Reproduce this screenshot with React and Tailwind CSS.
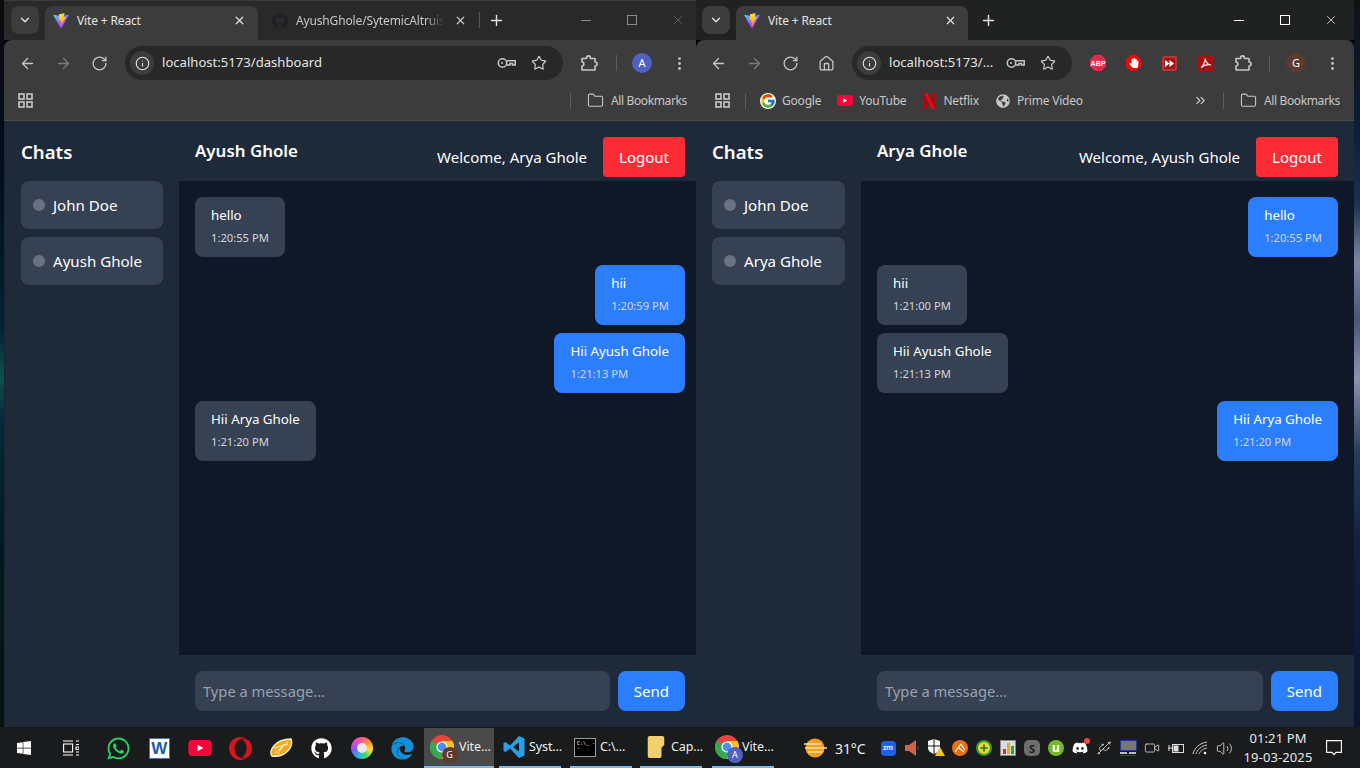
import React from "react";
import { ArrowLeft, ArrowRight, RotateCw, House, Info, Star, EllipsisVertical, Folder, X, Plus, ChevronDown, ChevronsRight, Usb, Volume2, Video } from "lucide-react";
import { FaWhatsapp, FaGithub, FaWindows, FaDiscord, FaGlobeAmericas, FaFolder, FaEdge, FaHandPaper } from "react-icons/fa";
import { FcGoogle } from "react-icons/fc";
import { SiOpera } from "react-icons/si";

const Vite = () => (
  <svg width="16" height="16" viewBox="0 0 410 404" fill="none">
    <defs>
      <linearGradient id="va" x1="6" y1="33" x2="235" y2="344" gradientUnits="userSpaceOnUse"><stop stopColor="#41D1FF" /><stop offset="1" stopColor="#BD34FE" /></linearGradient>
      <linearGradient id="vb" x1="194" y1="8" x2="236" y2="292" gradientUnits="userSpaceOnUse"><stop stopColor="#FFEA83" /><stop offset=".08" stopColor="#FFDD35" /><stop offset="1" stopColor="#FFA800" /></linearGradient>
    </defs>
    <path d="M399.641 59.5246L215.643 388.545C211.844 395.338 202.084 395.378 198.228 388.618L10.5817 59.5563C6.38087 52.1896 12.6802 43.2665 21.0281 44.7586L205.223 77.6824C206.398 77.8924 207.601 77.8904 208.776 77.6763L389.119 44.8058C397.439 43.2894 403.768 52.1434 399.641 59.5246Z" fill="url(#va)" />
    <path d="M292.965 1.5744L156.801 28.2552C154.563 28.6937 152.906 30.5903 152.771 32.8664L144.395 174.33C144.198 177.662 147.258 180.248 150.51 179.498L188.42 170.749C191.967 169.931 195.172 173.055 194.443 176.622L183.18 231.775C182.422 235.487 185.907 238.661 189.532 237.56L212.947 230.446C216.577 229.344 220.065 232.527 219.297 236.242L201.398 322.875C200.278 328.294 207.486 331.249 210.492 326.603L212.5 323.5L323.454 102.072C325.312 98.3645 322.108 94.137 318.036 94.9228L279.014 102.454C275.347 103.161 272.227 99.746 273.262 96.1583L298.731 7.86689C299.767 4.27314 296.636 0.855181 292.965 1.5744Z" fill="url(#vb)" />
  </svg>
);

const Slot = ({ w, className = "", children }) => (
  <div className={`flex shrink-0 items-center justify-center ${className}`} style={{ width: w }}>{children}</div>
);

const KeyIcon = () => (
  <svg width="20" height="12" viewBox="0 0 20 12" fill="none" stroke="#c7c7c7" strokeWidth="1.5">
    <circle cx="5.5" cy="6" r="4.2" /><circle cx="5" cy="6" r="1" fill="#c7c7c7" stroke="none" />
    <path d="M9.7 3.8H18.2V8H15.5V6.6H13V8H10" />
  </svg>
);
const PuzzleIcon = () => (
  <svg width="18" height="18" viewBox="0 0 18 18" fill="none" stroke="#c7c7c7" strokeWidth="1.6" strokeLinejoin="round">
    <path d="M2 4.5H6.5C6.5 1 10.5 1 10.5 4.5H15V8C17.8 8 17.8 12 15 12V16H2V12C4.5 12 4.5 8 2 8Z" />
  </svg>
);
const AppsIcon = () => (
  <svg width="15" height="15" viewBox="0 0 15 15" fill="none" stroke="#c7c7c7" strokeWidth="1.6">
    <rect x="1" y="1" width="5" height="5" /><rect x="9" y="1" width="5" height="5" /><rect x="1" y="9" width="5" height="5" /><rect x="9" y="9" width="5" height="5" />
  </svg>
);
const Avatar = ({ letter, bg, size = 20, text = "text-[11px]" }) => (
  <div className={`flex items-center justify-center rounded-full text-white ${text}`} style={{ width: size, height: size, background: bg }}>{letter}</div>
);
const Sep = () => <div className="h-4 w-[1px] shrink-0 bg-[#5e5e5e]" />;
const AllBookmarks = () => (
  <div className="flex shrink-0 items-center gap-[7px]">
    <Folder size={17} color="#c7c7c7" strokeWidth={1.5} />
    <span className="whitespace-nowrap text-[12px] tracking-[-0.36px] text-[#c7c7c7]">All Bookmarks</span>
  </div>
);
const TabClose = ({ color = "#e3e3e3" }) => <X size={13} color={color} strokeWidth={2.2} className="shrink-0" />;

const Nav = ({ icon: I, color = "#c7c7c7" }) => (
  <Slot w={36}><I size={17} color={color} strokeWidth={1.8} /></Slot>
);

const Omnibox = ({ w, url }) => (
  <div className="ml-2 flex h-[34px] shrink-0 items-center rounded-full bg-[#282828] pl-[5px]" style={{ width: w }}>
    <div className="flex h-6 w-6 shrink-0 items-center justify-center rounded-full bg-[#3c3c3c]"><Info size={15} color="#e3e3e3" strokeWidth={1.8} /></div>
    <span className="ml-2 flex-1 whitespace-nowrap text-[13.1px] text-[#e3e3e3]">{url}</span>
    <Slot w={32}><KeyIcon /></Slot>
    <Slot w={32}><Star size={16} color="#c7c7c7" strokeWidth={1.8} /></Slot>
    <div className="w-2 shrink-0" />
  </div>
);

const YT = ({ w = 16, h = 11 }) => (
  <svg width={w} height={h} viewBox="0 0 16 11"><rect width="16" height="11" rx="2.5" fill="#f5063b" /><path d="M6.3 3.2V7.8L10.3 5.5Z" fill="#fff" /></svg>
);
const Netflix = () => (
  <svg width="11" height="16" viewBox="0 0 11 16"><path d="M0 0H3.4V16L0 16Z" fill="#b1060f" /><path d="M7.6 0H11V16H7.6Z" fill="#b1060f" /><path d="M0 0H3.4L11 16H7.6Z" fill="#e50914" /></svg>
);

const Sidebar = ({ w, names }) => (
  <div className="flex shrink-0 flex-col bg-gray-800 p-4" style={{ width: w }}>
    <h2 className="mb-4 h-7 pt-[1px] text-[18.6px] font-semibold leading-7 text-white">Chats</h2>
    <div className="flex flex-col gap-2">
      {names.map((n) => (
        <div key={n} className="flex h-12 items-center gap-2 rounded-lg bg-gray-700 px-3">
          <span className="h-3 w-3 rounded-full bg-gray-500" />
          <span className="text-[15.1px] text-white">{n}</span>
        </div>
      ))}
    </div>
  </div>
);

const Bubble = ({ mine, text, time }) => (
  <div className={`flex ${mine ? "justify-end" : "justify-start"}`}>
    <div className={`h-[60px] rounded-lg px-4 pt-2 ${mine ? "bg-blue-500" : "bg-gray-700"}`}>
      <p className="h-5 text-[13.3px] leading-5 text-white">{text}</p>
      <p className="mt-[1px] text-[11.2px] leading-6 text-gray-300">{time}</p>
    </div>
  </div>
);

const Chat = ({ name, me, msgs, className }) => (
  <div className={`flex min-w-0 flex-col ${className}`}>
    <div className="flex h-[60px] shrink-0 items-start justify-between bg-gray-800 px-4 pt-4">
      <h2 className="text-[16.9px] font-semibold leading-7 text-white">{name}</h2>
      <div className="flex items-center gap-4">
        <span className="text-[15px] text-white">Welcome, {me}</span>
        <button className="h-10 rounded bg-red-500 px-4 text-[15px] text-white">Logout</button>
      </div>
    </div>
    <div className="flex flex-1 flex-col gap-2 bg-gray-900 p-4">
      {msgs.map((m, i) => <Bubble key={i} {...m} />)}
    </div>
    <div className="flex h-[72px] shrink-0 gap-2 bg-gray-800 p-4">
      <input readOnly placeholder="Type a message..." className="h-10 min-w-0 flex-1 rounded-lg bg-gray-700 px-2 text-[14.7px] text-white outline-none placeholder:text-gray-400" />
      <button className="h-10 rounded-lg bg-blue-500 px-4 text-[15px] text-white">Send</button>
    </div>
  </div>
);

const Window1 = () => (
  <div className="flex w-[692px] shrink-0 flex-col overflow-hidden">
    <div className="flex h-10 shrink-0 items-end border-t border-[#3a3a3a] bg-[#292929]">
      <div className="ml-[7px] mb-[6px] flex h-7 w-7 items-center justify-center rounded-lg bg-[#3c3c3c]"><ChevronDown size={14} color="#e3e3e3" strokeWidth={2.4} /></div>
      <div className="ml-[6px] flex h-[34px] w-[213px] items-center rounded-t-lg bg-[#3c3c3c] pb-[5px] pl-[8px] pr-[12px]">
        <Vite />
        <span className="ml-2 flex-1 whitespace-nowrap text-[12px] tracking-[-0.15px] text-[#e3e3e3]">Vite + React</span>
        <TabClose />
      </div>
      <div className="flex h-[34px] w-[221px] items-center pb-[5px] pl-[14px]">
        <FaGithub size={16} color="#1d2026" className="shrink-0" />
        <span className="ml-[8px] w-[148px] shrink-0 overflow-hidden whitespace-nowrap text-[12px] tracking-[-0.15px] text-[#c7c7c7] [mask-image:linear-gradient(90deg,#000_88%,transparent)]">AyushGhole/SytemicAltruism</span>
        <div className="ml-[10px]"><TabClose color="#c7c7c7" /></div>
      </div>
      <div className="mb-[12px] h-4 w-[1px] bg-[#555]" />
      <Slot w={33} className="mb-[11px]"><Plus size={17} color="#e3e3e3" strokeWidth={2} /></Slot>
      <div className="flex-1" />
      <div className="-mr-[5px] mb-[13px] flex items-center">
        <Slot w={46}><div className="h-[1px] w-[10px] bg-[#8a8a8a]" /></Slot>
        <Slot w={46}><div className="h-[10px] w-[10px] border border-[#8a8a8a]" /></Slot>
        <Slot w={46}><X size={14} color="#8a8a8a" strokeWidth={1} /></Slot>
      </div>
    </div>
    <div className="flex h-[41px] shrink-0 items-start rounded-tl-lg bg-[#3c3c3c] pl-[5px] pt-[6px]">
      <div className="flex h-[34px] items-center">
        <Nav icon={ArrowLeft} /><Nav icon={ArrowRight} color="#7b7b7b" /><Nav icon={RotateCw} />
        <Omnibox w={438} url="localhost:5173/dashboard" />
        <Slot w={36} className="ml-[8px]"><PuzzleIcon /></Slot>
        <div className="ml-[9px]"><Sep /></div>
        <Slot w={50}><Avatar letter="A" bg="#5261bf" /></Slot>
        <Slot w={24}><EllipsisVertical size={17} color="#c7c7c7" /></Slot>
      </div>
    </div>
    <div className="flex h-10 shrink-0 items-center border-b border-[#4b4b4b] bg-[#3c3c3c] pl-[14px]">
      <AppsIcon />
      <div className="flex-1" />
      <Sep />
      <div className="ml-[16px] mr-[9px]"><AllBookmarks /></div>
    </div>
    <div className="flex min-h-0 flex-1 border-l border-[#1b2431]">
      <Sidebar w={174} names={["John Doe", "Ayush Ghole"]} />
      <Chat className="w-[522px] shrink-0" name="Ayush Ghole" me="Arya Ghole" msgs={[
        { text: "hello", time: "1:20:55 PM" },
        { mine: true, text: "hii", time: "1:20:59 PM" },
        { mine: true, text: "Hii Ayush Ghole", time: "1:21:13 PM" },
        { text: "Hii Arya Ghole", time: "1:21:20 PM" },
      ]} />
    </div>
  </div>
);

const Window2 = () => (
  <div className="flex w-[658px] shrink-0 flex-col">
    <div className="flex h-10 shrink-0 items-end bg-[#202121]">
      <div className="ml-[6px] mb-[6px] flex h-7 w-7 items-center justify-center rounded-lg bg-[#3c3c3c]"><ChevronDown size={14} color="#e3e3e3" strokeWidth={2.4} /></div>
      <div className="ml-[6px] flex h-[34px] w-[232px] items-center rounded-t-lg bg-[#3c3c3c] pb-[5px] pl-[8px] pr-[11px]">
        <Vite />
        <span className="ml-2 flex-1 whitespace-nowrap text-[12px] tracking-[-0.15px] text-[#e3e3e3]">Vite + React</span>
        <TabClose />
      </div>
      <Slot w={40} className="mb-[11px]"><Plus size={17} color="#e3e3e3" strokeWidth={2} /></Slot>
      <div className="flex-1" />
      <div className="mb-[13px] flex items-center">
        <Slot w={46}><div className="h-[1px] w-[10px] bg-white" /></Slot>
        <Slot w={46}><div className="h-[10px] w-[10px] border border-white" /></Slot>
        <Slot w={46}><X size={14} color="#fff" strokeWidth={1.2} /></Slot>
      </div>
    </div>
    <div className="flex h-[41px] shrink-0 items-start rounded-t-lg bg-[#3c3c3c] pl-1 pt-[6px]">
      <div className="flex h-[34px] items-center">
        <Nav icon={ArrowLeft} /><Nav icon={ArrowRight} color="#7b7b7b" /><Nav icon={RotateCw} /><Nav icon={House} />
        <Omnibox w={220} url="localhost:5173/..." />
        <Slot w={36} className="ml-[8px]">
          <svg width="16" height="16" viewBox="0 0 16 16"><path d="M4.7 0H11.3L16 4.7V11.3L11.3 16H4.7L0 11.3V4.7Z" fill="#f0264f" /><text x="8" y="10.5" textAnchor="middle" fontSize="7" fontWeight="700" fill="#fff" fontFamily="Liberation Sans">ABP</text></svg>
        </Slot>
        <Slot w={35}>
          <div className="flex h-4 w-4 items-center justify-center bg-[#e80b0b] [clip-path:polygon(30%_0,70%_0,100%_30%,100%_70%,70%_100%,30%_100%,0_70%,0_30%)]"><FaHandPaper size={10} color="#fff" /></div>
        </Slot>
        <Slot w={37}>
          <div className="flex h-[15px] w-[15px] items-center justify-center rounded-[2px] border-2 border-[#b43636] bg-[#a01616]">
            <svg width="9" height="7" viewBox="0 0 9 7"><path d="M0 0L4.5 3.5L0 7ZM4.5 0L9 3.5L4.5 7Z" fill="#fff" /></svg>
          </div>
        </Slot>
        <Slot w={36}>
          <div className="flex h-4 w-4 items-center justify-center rounded-[2px] bg-[#a80f0f]">
            <svg width="12" height="12" viewBox="0 0 12 12" fill="none" stroke="#fff" strokeWidth="1.1"><path d="M1 10.5C3 9.5 5 5 5.3 1.5C5.6 5 8 8 11 8C8 7.2 4 8 1 10.5Z" /></svg>
          </div>
        </Slot>
        <Slot w={38}><PuzzleIcon /></Slot>
        <Slot w={14}><Sep /></Slot>
        <Slot w={40}><Avatar letter="G" bg="#5b3a30" text="text-[11px] text-[#d8d8d8]" /></Slot>
        <Slot w={32}><EllipsisVertical size={17} color="#c7c7c7" /></Slot>
      </div>
    </div>
    <div className="flex h-10 shrink-0 items-center border-b border-[#4b4b4b] bg-[#3c3c3c] pl-[19px]">
      <AppsIcon />
      <div className="ml-[15px] mr-[14px]"><Sep /></div>
      <div className="flex items-center gap-[6px]"><FcGoogle size={16} className="rounded-full bg-white" /><span className="text-[12px] tracking-[-0.2px] text-[#c7c7c7]">Google</span></div>
      <div className="ml-[16px] flex items-center gap-[6px]"><YT /><span className="text-[12px] tracking-[-0.2px] text-[#c7c7c7]">YouTube</span></div>
      <div className="ml-[18px] flex items-center gap-[8px]"><Netflix /><span className="text-[12px] tracking-[-0.2px] text-[#c7c7c7]">Netflix</span></div>
      <div className="ml-[17px] flex items-center gap-[7px]"><FaGlobeAmericas size={14} color="#c7c7c7" /><span className="whitespace-nowrap text-[12px] tracking-[-0.2px] text-[#c7c7c7]">Prime Video</span></div>
      <div className="flex-1" />
      <ChevronsRight size={15} color="#c7c7c7" />
      <div className="ml-[15px] mr-[16px]"><Sep /></div>
      <div className="mr-[14px]"><AllBookmarks /></div>
    </div>
    <div className="flex min-h-0 flex-1">
      <Sidebar w={165} names={["John Doe", "Arya Ghole"]} />
      <Chat className="flex-1" name="Arya Ghole" me="Ayush Ghole" msgs={[
        { mine: true, text: "hello", time: "1:20:55 PM" },
        { text: "hii", time: "1:21:00 PM" },
        { text: "Hii Ayush Ghole", time: "1:21:13 PM" },
        { mine: true, text: "Hii Arya Ghole", time: "1:21:20 PM" },
      ]} />
    </div>
  </div>
);

const Chrome = ({ letter, bg }) => (
  <div className="relative h-[24px] w-[24px] shrink-0">
    <svg width="24" height="24" viewBox="0 0 24 24">
      <circle cx="12" cy="12" r="12" fill="#e8453c" />
      <path d="M12 12L1.6 6A12 12 0 0 0 12 24L18 15Z" fill="#34a853" />
      <path d="M12 12L12 24A12 12 0 0 0 22.4 6H12Z" fill="#fbc116" />
      <circle cx="12" cy="12" r="5.6" fill="#fff" /><circle cx="12" cy="12" r="4.4" fill="#4a90f0" />
    </svg>
    <div className="absolute -bottom-[4px] -right-[4px]"><Avatar letter={letter} bg={bg} size={16} text="text-[9px]" /></div>
  </div>
);

const TaskApp = ({ w, active, icon, label, iconW = 34, ml = 0 }) => (
  <div className={`flex h-10 shrink-0 items-center border-b-[2px] border-[#76b9ed] ${active ? "bg-[#4a4a4a]" : ""}`} style={{ width: w, marginLeft: ml }}>
    <Slot w={iconW}>{icon}</Slot>
    <span className="whitespace-nowrap text-[12.5px] tracking-[-0.1px] text-[#eeeeee]">{label}</span>
  </div>
);

const T = ({ children, w = 40.5 }) => <Slot w={w}>{children}</Slot>;

const Taskbar = () => (
  <div className="flex h-[41px] shrink-0 items-center border-t border-[#16191c] bg-[#1a1b1c]">
    <T w={48}><FaWindows size={16} color="#fff" /></T>
    <T w={46}>
      <svg width="16" height="16" viewBox="0 0 16 16" fill="none" stroke="#fff" strokeWidth="1.1"><path d="M0 1H10M0 15H10" /><rect x=".6" y="4" width="9" height="8" /><path d="M13 1H16M13 4.5H16M13 7H16V9.5H13ZM13 12H16M13 15H16" /></svg>
    </T>
    <div className="w-[4.5px]" />
    <T><FaWhatsapp size={25} color="#25d366" /></T>
    <T>
      <div className="flex h-[21px] w-[21px] items-center justify-center border border-[#3f74c4] bg-white text-[17px] font-bold leading-none text-[#2458ad] [font-family:'Liberation_Sans',sans-serif]">W</div>
    </T>
    <T><YT w={24} h={16} /></T>
    <T><SiOpera size={23} color="#d8141f" /></T>
    <T>
      <svg width="24" height="20" viewBox="0 0 24 20"><path d="M3 18C-1 13 6 1 22 1C25 9 16 20 3 18Z" fill="#f6a81c" stroke="#fff3c8" strokeWidth="1.4" /><path d="M6 15L19 4M9 16L15 6M5 10L19 6" stroke="#fff3c8" strokeWidth="1" /></svg>
    </T>
    <T><FaGithub size={21} color="#fff" /></T>
    <T>
      <div className="flex h-[22px] w-[22px] items-center justify-center rounded-full bg-[conic-gradient(#ff5c8a,#ff9a2e,#f5e02e,#3fd66a,#27b7e6,#7a5cf0,#e04bd0,#ff5c8a)]"><div className="h-[10px] w-[10px] rounded-full bg-[#e8e8e8]" /></div>
    </T>
    <T><FaEdge size={23} color="#1391d8" /></T>
    <div className="w-[1.5px]" />
    <TaskApp w={70} active icon={<Chrome letter="G" bg="#5b3a30" />} label="Vite..." iconW={35} />
    <TaskApp w={62} ml={5} icon={
      <svg width="24" height="24" viewBox="0 0 24 24"><path fillRule="evenodd" d="M17 1L8 10.5L3.5 7L1.5 8V16L3.5 17L8 13.5L17 23L22.5 20.5V3.5ZM17 7.5V16.5L11 12Z" fill="#2a9fe8" /></svg>
    } label="Syst..." iconW={30} />
    <TaskApp w={62} ml={9} icon={
      <div className="flex h-[19px] w-[22px] items-start border border-[#9a9a9a] bg-black pl-[2px] pt-[3px] font-mono text-[5px] leading-none text-white">C:\_ --</div>
    } label="C:\..." iconW={30} />
    <TaskApp w={62} ml={8} icon={<FaFolder size={22} color="#f3cf6b" style={{ transform: "rotate(90deg)" }} />} label="Cap..." iconW={31} />
    <TaskApp w={62} ml={10} icon={<Chrome letter="A" bg="#5261bf" />} label="Vite..." iconW={30} />
    <div className="w-[28px] shrink-0" />
    <T w={26}>
      <svg width="24" height="20" viewBox="0 0 24 20"><circle cx="12" cy="10" r="9.5" fill="#f0a020" /><path d="M1 6H18M2 10H24M5 14H20" stroke="#ffe0a0" strokeWidth="1.4" /></svg>
    </T>
    <span className="ml-[7px] w-[41px] shrink-0 whitespace-nowrap text-[14px] tracking-[-0.1px] text-[#eeeeee]">31°C</span>
    <T w={24}><div className="flex h-[15px] w-[15px] items-center justify-center rounded-[4px] bg-[#1a63e8] text-[7px] font-semibold text-white">zm</div></T>
    <T w={24}>
      <svg width="14" height="16" viewBox="0 0 14 16"><path d="M0 5H4L11 0V16L4 11H0Z" fill="#d0644a" /><path d="M13 6V10" stroke="#6b4a3a" /></svg>
    </T>
    <T w={24}>
      <svg width="18" height="18" viewBox="0 0 18 18"><path d="M1 2L7 0L13 2V9C13 13 7 15 7 15C7 15 1 13 1 9Z" fill="#fff" /><path d="M7 0V15M1 7H13" stroke="#111" /><path d="M13 8L18 17H8Z" fill="#f5c518" /></svg>
    </T>
    <T w={24}>
      <div className="flex h-4 w-4 items-center justify-center rounded-full bg-[#f07010]"><svg width="10" height="10" viewBox="0 0 10 10" fill="none" stroke="#fff" strokeWidth="1.2"><path d="M0 9L6 1L10 7M4 5L9 9" /></svg></div>
    </T>
    <T w={24}>
      <div className="flex h-4 w-4 items-center justify-center rounded-full border-2 border-[#2e9b3a] bg-[#f2d22e]"><Plus size={10} color="#1e7a2a" strokeWidth={4} /></div>
    </T>
    <T w={24}>
      <div className="flex h-4 w-4 items-end justify-center gap-[1px] border border-[#888] bg-[#ddd] pb-[1px]">
        <div className="h-[5px] w-[3px] bg-[#d12f2f]" /><div className="h-[11px] w-[3px] bg-[#e0b020]" /><div className="h-2 w-[3px] bg-[#2f9f3f]" />
      </div>
    </T>
    <T w={24}><div className="flex h-4 w-4 items-center justify-center rounded-[5px] bg-[#6e6e6e] text-[11px] font-bold leading-none text-[#1a1a1a]">S</div></T>
    <T w={24}><div className="flex h-4 w-4 items-center justify-center rounded-full bg-[#76b82a] text-[12px] font-bold leading-none text-white">u</div></T>
    <T w={24}>
      <div className="relative"><FaDiscord size={16} color="#fff" /><div className="absolute -right-[2px] -top-[2px] h-[6px] w-[6px] rounded-full bg-[#f04747]" /></div>
    </T>
    <T w={24}><Usb size={16} color="#ddd" strokeWidth={1.2} /></T>
    <T w={24}>
      <svg width="17" height="16" viewBox="0 0 17 16"><rect x=".5" y=".5" width="16" height="10" fill="#777" stroke="#223a8a" /><path d="M0 13H7M9 13H16" stroke="#bbb" strokeWidth="2" /><path d="M0 15.5H16" stroke="#223a8a" /></svg>
    </T>
    <T w={24}><Video size={16} color="#ddd" strokeWidth={1.2} /></T>
    <T w={24}>
      <svg width="16" height="11" viewBox="0 0 16 11" fill="none" stroke="#ddd"><rect x="4.5" y="1.5" width="11" height="8" /><rect x="5.5" y="2.5" width="5" height="6" fill="#ddd" stroke="none" /><path d="M0 5H4M1 2V8" /></svg>
    </T>
    <T w={24}>
      <svg width="16" height="14" viewBox="0 0 16 14" fill="none" stroke="#ccc"><path d="M1 13C2 7 8 2 15 1M4 13C5 9 9 5 15 4M7 13C8 11 10 8 15 7" /><circle cx="13" cy="12" r="1.3" fill="#fff" stroke="none" /></svg>
    </T>
    <T w={24}><Volume2 size={17} color="#ddd" strokeWidth={1.2} /></T>
    <div className="ml-[7px] flex w-[70px] shrink-0 flex-col items-center text-[13px] leading-[19px] tracking-[0.1px] text-[#e8e8e8]">
      <span>01:21 PM</span><span className="whitespace-nowrap">19-03-2025</span>
    </div>
    <Slot w={41}>
      <svg width="16" height="16" viewBox="0 0 16 16" fill="none" stroke="#fff" strokeWidth="1.1"><path d="M.6.6H15.4V12.4H10L8 14.6L6 12.4H.6Z" /></svg>
    </Slot>
  </div>
);

export default function App() {
  return (
    <div className="flex h-[768px] w-[1360px] flex-col overflow-hidden bg-black [font-family:'Noto_Sans',sans-serif]">
      <div className="flex min-h-0 flex-1">
        <div className="w-[4px] shrink-0 bg-[linear-gradient(180deg,#0b0c10_0%,#020a1c_20%,#032235_45%,#0e4f52_52%,#04283a_58%,#021a22_75%,#04130f_100%)]" />
        <Window1 />
        <Window2 />
        <div className="w-[6px] shrink-0 bg-[linear-gradient(180deg,#101214_0%,#0d1d3e_18%,#1d2f52_28%,#7d86a3_36%,#495577_44%,#8c93ad_52%,#2b3b60_62%,#122142_75%,#0a1430_100%)]" />
      </div>
      <Taskbar />
    </div>
  );
}
